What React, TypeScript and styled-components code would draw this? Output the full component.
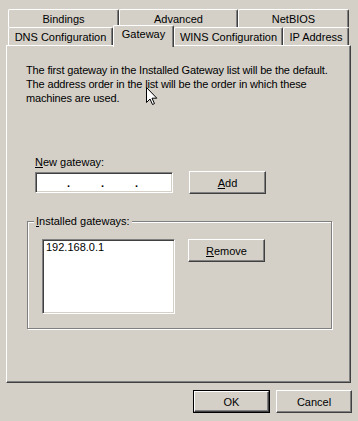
import React from "react";
import styled, { createGlobalStyle } from "styled-components";

const GlobalStyle = createGlobalStyle`
  html, body {
    margin: 0;
    padding: 0;
    background: #d4d0c8;
  }
  body {
    font-family: "Liberation Sans", Arial, sans-serif;
    font-size: 11px;
    color: #000;
  }
`;

const backTabs = [
  { label: "Bindings", w: 111 },
  { label: "Advanced", w: 119 },
  { label: "NetBIOS", w: 111 },
];

const frontTabs = [
  { label: "DNS Configuration", w: 105 },
  { label: "Gateway", w: 61, active: true },
  { label: "WINS Configuration", w: 109 },
  { label: "IP Address", w: 66 },
];

const App: React.FC = () => {
  return (
    <>
      <GlobalStyle />
      <SDialog>
        <STabStrip>
          <STabRow>
            {backTabs.map((t) => (
              <STab key={t.label} $w={t.w}>
                {t.label}
              </STab>
            ))}
          </STabRow>
          <STabRow>
            {frontTabs.map((t) => (
              <STab key={t.label} $w={t.w} $active={t.active}>
                {t.label}
              </STab>
            ))}
          </STabRow>
        </STabStrip>

        <SPanel>
          <SDescription>
            The first gateway in the Installed Gateway list will be the default.
            <br />
            The address order in the list will be the order in which these
            <br />
            machines are used.
          </SDescription>

          <SFieldLabel>
            <u>N</u>ew gateway:
          </SFieldLabel>
          <SRow>
            <SIpBox>
              <SDot>.</SDot>
              <SDot>.</SDot>
              <SDot>.</SDot>
            </SIpBox>
            <SButton $w={77}>
              <u>A</u>dd
            </SButton>
          </SRow>

          <SGroupBox>
            <SGroupLegend>
              <u>I</u>nstalled gateways:
            </SGroupLegend>
            <SListBox>
              <SListItem>192.168.0.1</SListItem>
            </SListBox>
            <SButton $w={77}>
              <u>R</u>emove
            </SButton>
          </SGroupBox>
        </SPanel>

        <SFooter>
          <SDefaultButton>
            <SButton $w={75} $h={21}>
              OK
            </SButton>
          </SDefaultButton>
          <SButton $w={76} $h={23}>
            Cancel
          </SButton>
        </SFooter>

        <SCursor width="12" height="19" viewBox="0 0 12 19">
          <path
            d="M0.5 0.5 L0.5 15.5 L4 12 L6.5 17.5 L8.5 16.6 L6 11.2 L10.8 11.2 Z"
            fill="#fff"
            stroke="#000"
            strokeWidth="1"
            strokeLinejoin="miter"
          />
        </SCursor>
      </SDialog>
    </>
  );
};

export default App;

const SDialog = styled.div`
  position: relative;
  width: 358px;
  height: 421px;
  box-sizing: border-box;
  padding: 9px 0 0 6px;
  display: flex;
  flex-direction: column;
`;

const STabStrip = styled.div`
  display: flex;
  flex-direction: column;
  margin-left: 2px;
  width: 341px;
`;

const STabRow = styled.div`
  display: flex;
  height: 18px;
  align-items: flex-start;
`;

const STab = styled.div<{ $w: number; $active?: boolean }>`
  position: relative;
  z-index: ${(p) => (p.$active ? 2 : 1)};
  box-sizing: border-box;
  width: ${(p) => p.$w}px;
  height: ${(p) => (p.$active ? 22 : 18)}px;
  margin-top: ${(p) => (p.$active ? -2 : 0)}px;
  padding-top: ${(p) => (p.$active ? 0 : 1)}px;
  display: flex;
  align-items: ${(p) => (p.$active ? "flex-start" : "center")};
  justify-content: center;
  background: #d4d0c8;
  border-left: 1px solid #fff;
  border-top: 1px solid #fff;
  border-right: 1px solid #404040;
  box-shadow: inset -1px 0 0 #808080;
  border-top-left-radius: 2px;
  border-top-right-radius: 2px;
  white-space: nowrap;
  line-height: ${(p) => (p.$active ? "17px" : "14px")};
`;

const SPanel = styled.div`
  position: relative;
  box-sizing: border-box;
  width: 345px;
  height: 338px;
  padding: 17px 0 0 19px;
  border-left: 1px solid #fff;
  border-top: 1px solid #fff;
  border-right: 1px solid #404040;
  border-bottom: 1px solid #404040;
  box-shadow: inset -1px -1px 0 #808080;
  display: flex;
  flex-direction: column;
  align-items: flex-start;
`;

const SDescription = styled.div`
  line-height: 14px;
  letter-spacing: -0.15px;
  white-space: nowrap;
`;

const SFieldLabel = styled.div`
  margin: 50px 0 0 9px;
  line-height: 14px;
`;

const SRow = styled.div`
  display: flex;
  align-items: flex-start;
  gap: 16px;
  margin: 2px 0 0 9px;
`;

const SSunken = styled.div`
  box-sizing: border-box;
  background: #fff;
  border-top: 1px solid #808080;
  border-left: 1px solid #808080;
  border-right: 1px solid #fff;
  border-bottom: 1px solid #fff;
  box-shadow: inset 1px 1px 0 #404040, inset -1px -1px 0 #d4d0c8;
`;

const SIpBox = styled(SSunken)`
  width: 138px;
  height: 21px;
  margin-top: 1px;
  display: flex;
  align-items: center;
  gap: 31px;
  padding: 0 0 0 31px;
  line-height: 14px;
`;

const SDot = styled.span`
  font-weight: bold;
  width: 3px;
`;

const SButton = styled.button<{ $w: number; $h?: number }>`
  box-sizing: border-box;
  width: ${(p) => p.$w}px;
  height: ${(p) => p.$h ?? 23}px;
  padding: 0;
  margin: 0;
  font: inherit;
  color: #000;
  background: #d4d0c8;
  border-top: 1px solid #fff;
  border-left: 1px solid #fff;
  border-right: 1px solid #404040;
  border-bottom: 1px solid #404040;
  box-shadow: inset -1px -1px 0 #808080;
  border-radius: 0;
  cursor: default;
`;

const SDefaultButton = styled.div`
  border: 1px solid #000;
  display: flex;
`;

const SGroupBox = styled.div`
  position: relative;
  box-sizing: border-box;
  width: 305px;
  height: 108px;
  margin: 27px 0 0 1px;
  padding: 17px 0 0 14px;
  border: 1px solid #808080;
  box-shadow: inset 1px 1px 0 #fff, 1px 1px 0 #fff;
  display: flex;
  align-items: flex-start;
  gap: 13px;
`;

const SGroupLegend = styled.div`
  position: absolute;
  left: 6px;
  top: -8px;
  padding: 0 2px;
  background: #d4d0c8;
  line-height: 14px;
`;

const SListBox = styled(SSunken)`
  width: 133px;
  height: 75px;
  padding: 1px 0 0 3px;
`;

const SListItem = styled.div`
  line-height: 13px;
`;

const SFooter = styled.div`
  display: flex;
  justify-content: flex-end;
  gap: 6px;
  padding: 7px 6px 0 0;
`;

const SCursor = styled.svg`
  position: absolute;
  left: 146px;
  top: 87px;
  pointer-events: none;
`;
